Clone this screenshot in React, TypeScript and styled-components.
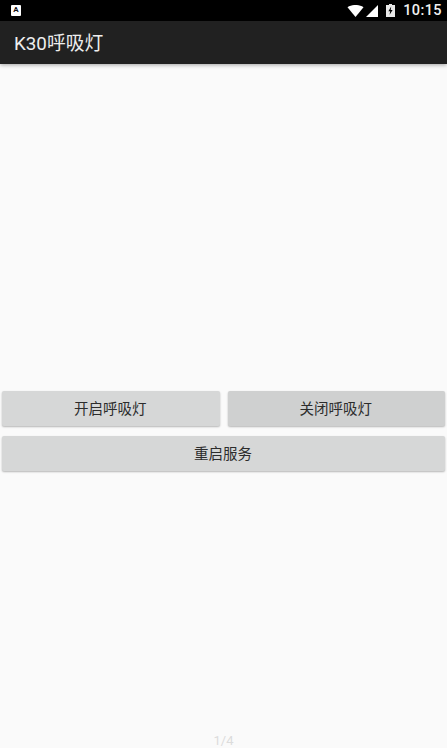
import React from "react";
import styled, { createGlobalStyle } from "styled-components";

const Global = createGlobalStyle`
  html, body { margin: 0; padding: 0; background: #fafafa; }
  * { box-sizing: border-box; }
`;

const Screen = styled.div`
  position: relative;
  width: 447px;
  height: 748px;
  overflow: hidden;
  display: flex;
  flex-direction: column;
  background: #fafafa;
  font-family: Roboto, "Noto Sans CJK SC", sans-serif;
`;

const StatusBar = styled.div`
  height: 21px;
  flex: none;
  background: #000;
  display: flex;
  align-items: center;
  justify-content: space-between;
  padding: 0 5px 0 11px;
`;

const NotifyIcon = styled.div`
  width: 10px;
  height: 11px;
  background: #fff;
  border-radius: 1px;
  color: #111;
  font-size: 8px;
  font-weight: 700;
  line-height: 10px;
  text-align: center;
`;

const StatusRight = styled.div`
  display: flex;
  align-items: center;
`;

const WifiIcon = styled.svg`
  width: 17px;
  height: 12px;
`;

const SignalIcon = styled.svg`
  width: 12px;
  height: 12px;
  margin-left: 2px;
`;

const BatteryIcon = styled.svg`
  width: 9px;
  height: 13px;
  margin-left: 8px;
`;

const Clock = styled.span`
  color: #f0f0f0;
  font-size: 14.5px;
  font-weight: 500;
  letter-spacing: 0.4px;
  margin-left: 8px;
  line-height: 21px;
`;

const AppBar = styled.header`
  height: 43px;
  flex: none;
  background: #212121;
  color: #eeeeee;
  font-size: 18.8px;
  font-weight: 400;
  display: flex;
  align-items: center;
  padding: 0 0 2px 14px;
  box-shadow: 0 1px 4px rgba(0, 0, 0, 0.35);
  position: relative;
`;

const Content = styled.main`
  flex: 1;
  display: flex;
  flex-direction: column;
  gap: 10px;
  padding: 327px 2px 0;
`;

const Row = styled.div`
  display: flex;
  gap: 8px;
`;

const Button = styled.button<{ $tone?: string }>`
  flex: 1;
  height: 35px;
  border: 0;
  border-radius: 2px;
  background: ${(p) => p.$tone ?? "#d6d7d7"};
  color: #2c2c2c;
  font-family: inherit;
  font-size: 14.5px;
  padding: 0 1px 3px 0;
  box-shadow: 0 1px 2px rgba(0, 0, 0, 0.28);
`;

const Pager = styled.div`
  position: absolute;
  left: 0;
  right: 0;
  bottom: -1px;
  text-align: center;
  color: #dcdcdc;
  font-size: 13px;
  line-height: 16px;
`;

export default function App() {
  return (
    <Screen>
      <Global />
      <StatusBar>
        <NotifyIcon>A</NotifyIcon>
        <StatusRight>
          <WifiIcon viewBox="0 0 16 12">
            <path d="M0 2.2C4.5-.8 11.5-.8 16 2.2L8 12Z" fill="#fff" />
          </WifiIcon>
          <SignalIcon viewBox="0 0 13 13">
            <path d="M13 0V13H0Z" fill="#fff" />
          </SignalIcon>
          <BatteryIcon viewBox="0 0 9 13">
            <path d="M3 0H6V1H9V13H0V1H3Z" fill="#e8e8e8" />
            <path d="M5.2 2.5L2.4 7.2H4.2L3.6 10.8L6.6 6H4.7Z" fill="#000" />
          </BatteryIcon>
          <Clock>10:15</Clock>
        </StatusRight>
      </StatusBar>
      <AppBar>K30呼吸灯</AppBar>
      <Content>
        <Row>
          <Button>开启呼吸灯</Button>
          <Button $tone="#cfd0d0">关闭呼吸灯</Button>
        </Row>
        <Row>
          <Button>重启服务</Button>
        </Row>
      </Content>
      <Pager>1/4</Pager>
    </Screen>
  );
}
